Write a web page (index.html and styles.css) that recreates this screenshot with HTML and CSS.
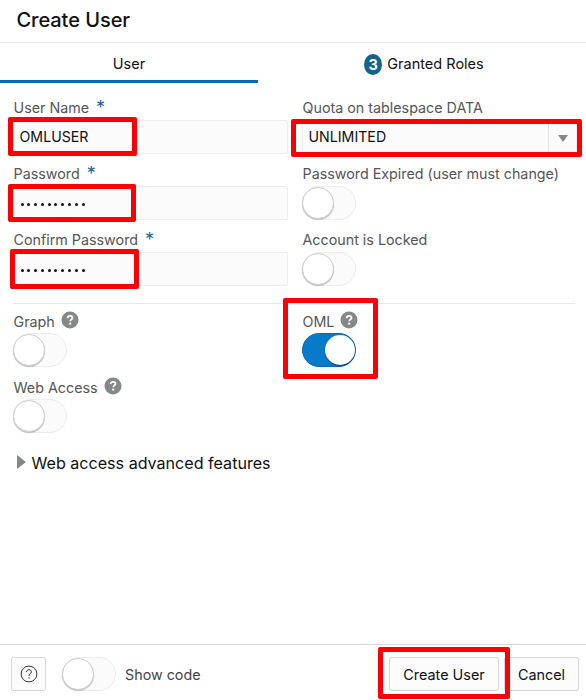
FILE: index.html
```html
<!DOCTYPE html>
<html lang="en">
<head>
<meta charset="utf-8">
<title>Create User</title>
<link rel="stylesheet" href="styles.css">
</head>
<body>
<svg class="defs" width="0" height="0" aria-hidden="true">
  <symbol id="help" viewBox="0 0 18 18">
    <circle cx="9" cy="9" r="8.5" fill="#85888a"/>
    <path d="M6.6 7.1C6.7 5.6 7.7 4.8 9.1 4.8c1.5 0 2.4.8 2.4 2 0 1.5-2.2 1.7-2.2 3.4" fill="none" stroke="#fff" stroke-width="1.8"/>
    <circle cx="9.2" cy="12.7" r="1.15" fill="#fff"/>
  </symbol>
</svg>
<main class="dialog">
  <header class="header"><h1>Create User</h1></header>
  <nav class="tabs">
    <div class="tab active"><span>User</span></div>
    <div class="tab"><span class="badge">3</span><span>Granted Roles</span></div>
  </nav>
  <section class="form">
    <div class="cell">
      <div class="label"><span>User Name</span><span class="req">*</span></div>
      <div class="field"><span>OMLUSER</span></div>
      <i class="mark m-name"></i>
    </div>
    <div class="cell">
      <div class="label"><span>Quota on tablespace DATA</span></div>
      <div class="field select"><span>UNLIMITED</span><span class="drop"><i class="caret"></i></span></div>
      <i class="mark m-quota"></i>
    </div>
    <div class="cell">
      <div class="label"><span>Password</span><span class="req">*</span></div>
      <div class="field"><span class="dots"><i></i><i></i><i></i><i></i><i></i><i></i><i></i><i></i><i></i><i></i></span></div>
      <i class="mark m-pass"></i>
    </div>
    <div class="cell">
      <div class="label"><span>Password Expired (user must change)</span></div>
      <div class="toggle"><i></i></div>
    </div>
    <div class="cell">
      <div class="label"><span>Confirm Password</span><span class="req">*</span></div>
      <div class="field"><span class="dots"><i></i><i></i><i></i><i></i><i></i><i></i><i></i><i></i><i></i><i></i></span></div>
      <i class="mark m-confirm"></i>
    </div>
    <div class="cell">
      <div class="label"><span>Account is Locked</span></div>
      <div class="toggle"><i></i></div>
    </div>
  </section>
  <section class="form features">
    <div class="cell">
      <div class="label"><span>Graph</span><svg class="help"><use href="#help"/></svg></div>
      <div class="toggle"><i></i></div>
    </div>
    <div class="cell">
      <div class="label"><span>OML</span><svg class="help"><use href="#help"/></svg></div>
      <div class="toggle on"><i></i></div>
      <i class="mark m-oml"></i>
    </div>
    <div class="cell">
      <div class="label"><span>Web Access</span><svg class="help"><use href="#help"/></svg></div>
      <div class="toggle"><i></i></div>
    </div>
  </section>
  <div class="advanced"><i class="arrow"></i><span>Web access advanced features</span></div>
  <footer class="footer">
    <div class="button help-btn">
      <svg width="18" height="18" viewBox="0 0 18 18" fill="none" stroke="#333"><circle cx="9" cy="9" r="7.9"/><path d="M6.6 7.1C6.6 5.6 7.6 4.7 9 4.7s2.4.9 2.4 2.2C11.4 8.7 9 8.8 9 11"/><circle cx="9" cy="13" r=".65" fill="#333" stroke="none"/></svg>
    </div>
    <div class="toggle code-toggle"><i></i></div>
    <span class="code-text">Show code</span>
    <div class="actions">
      <div class="button create"><span>Create User</span><i class="mark m-create"></i></div>
      <div class="button cancel"><span>Cancel</span></div>
    </div>
  </footer>
</main>
</body>
</html>
```

FILE: styles.css
```css
* { box-sizing: border-box; }
body { margin: 0; background: #fff; color: #111; font: 14.5px/20px Inter, "Liberation Sans", sans-serif; }
.defs { position: absolute; }
.dialog { display: flex; flex-direction: column; width: 586px; height: 700px; overflow: hidden; }
.header { height: 43px; padding: 8px 16.5px 0; border-bottom: 1px solid #ececec; }
h1 { margin: 0; font-size: 20px; line-height: 24px; font-weight: 500; letter-spacing: -.05px; }
.tabs { display: flex; height: 40px; }
.tab { width: 258px; display: flex; align-items: center; justify-content: center; gap: 5px; }
.tab.active { border-bottom: 3px solid #0768bd; padding-top: 5px; }
.tab:last-child { width: 328px; padding: 2px 0 0 4px; }
.badge { width: 18px; height: 21px; border-radius: 9px / 10.5px; background: #16638a; color: #fff; font-weight: 700; line-height: 21px; text-align: center; }
.form { display: grid; grid-template-columns: 275px 275px; column-gap: 14px; grid-auto-rows: 66px; margin: 15px 11px 0 13px; }
.cell { position: relative; }
.label { display: flex; height: 22px; padding-left: .5px; line-height: 20px; font-size: 14.3px; color: #555; white-space: nowrap; }
.req { margin-left: 7px; color: #14659f; font-size: 18px; line-height: 20px; }
.field { height: 34px; display: flex; align-items: center; padding-left: 5.5px; background: #fbfbfb; border: 1px solid #ededed; border-radius: 2px; font-size: 14.2px; }
.drop { width: 28px; height: 32px; margin-left: auto; border-left: 1px solid #e2e2e2; display: flex; align-items: center; justify-content: center; }
.caret { border: 5px solid transparent; border-top: 7px solid #85888a; border-bottom: 0; margin-top: 2px; }
.dots { display: flex; gap: 3.8px; padding-left: 1px; padding-top: 2px; }
.dots i { width: 3px; height: 3px; border-radius: 50%; background: #111; }
.toggle { width: 54px; height: 34px; border: 1px solid #ececec; border-radius: 17px; background: #fbfbfb; }
.toggle i { display: block; width: 32px; height: 32px; margin-left: -1px; border-radius: 50%; background: #fff; border: 1px solid #cfcfcf; box-shadow: 0 1px 1px #bbb; }
.toggle.on { background: #057bc9; border-color: #0768bd; display: flex; justify-content: flex-end; }
.toggle.on i { width: 30px; height: 30px; margin-top: 1px; border: 0; box-shadow: 0 1px 1px #00387c; }
.features { margin-top: 7px; padding-top: 7px; border-top: 1px solid #e8e8e8; }
.features .label { padding-top: 1px; height: 22px; }
.features .toggle { margin-top: 0; }
.help { width: 18px; height: 18px; margin-left: 6px; margin-top: -1px; }
.advanced { display: flex; align-items: center; gap: 6px; margin: 10px 16.5px 0; height: 20px; font-size: 16.1px; }
.arrow { border: 7px solid transparent; border-left: 9px solid #85888a; border-right: 0; margin-top: -2px; }
.footer { height: 56px; margin-top: auto; padding: 12px 7px 0 11px; border-top: 1px solid #d8d8d8; display: flex; color: #444; }
.button { height: 34px; display: flex; align-items: center; justify-content: center; border: 1px solid #d8d8d8; border-radius: 2px; background: #fcfcfc; position: relative; white-space: nowrap; color: #111; }
.button span { padding-top: 1px; }
.help-btn { width: 35px; }
.code-toggle { margin-left: 16px; }
.code-text { margin-left: 9px; line-height: 36px; font-size: 14.3px; }
.actions { display: flex; margin-left: auto; gap: 5px; font-size: 14.4px; }
.create { width: 110px; }
.cancel { width: 75px; }
.mark { position: absolute; z-index: 1; border: 5px solid #fd0006; border-radius: 2px; }
.m-name { left: -5px; top: 19px; width: 128.5px; height: 39px; }
.m-quota { left: -11px; top: 21px; width: 291px; height: 38px; }
.m-pass { left: -5px; top: 20px; width: 127.5px; height: 38px; }
.m-confirm { left: -3px; top: 19px; width: 128.5px; height: 40px; }
.m-oml { left: -19px; top: -13px; width: 95px; height: 81px; }
.m-create { left: -12px; top: -11px; width: 132px; height: 52px; }
```
